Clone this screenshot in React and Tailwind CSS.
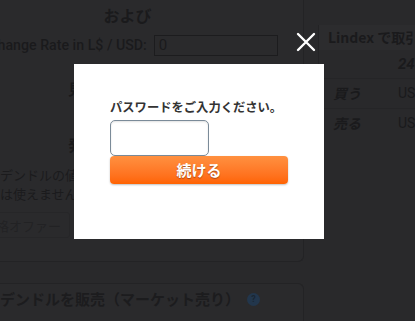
import React from 'react';

const LeftColumn = () => (
    <div className="w-[352px] shrink-0 ml-[-48px] flex flex-col">
        {/* Buy card */}
        <div className="h-[262px] bg-[#2a2a2c] border-r border-b border-[#232325] rounded-br-[6px] flex flex-col">
            <div className="h-[27px] flex items-end justify-center text-[16px] font-bold text-[#1a1a1c]">
                および
            </div>
            <div className="mt-[8px] ml-[-2px] flex items-center justify-center gap-[7px]">
                <span className="font-['Roboto',sans-serif] text-[14.2px] font-medium text-[#1a1a1c]">Exchange Rate in L$ / USD:</span>
                <div className="w-[124px] h-[21px] border border-[#1c1c1e] px-[4px] flex items-center font-['Roboto',sans-serif] text-[15px] text-[#1a1a1c]">0</div>
            </div>
            <div className="mt-[22px] pl-[116px] text-[15px] font-bold text-[#1a1a1c]">見積もり合計金額</div>
            <div className="mt-[33px] pl-[116px] text-[15px] font-bold text-[#1a1a1c]">発注するデンドル数</div>
            <div className="mt-[9px] pl-[48px] text-[13px] leading-[19px] text-[#1b1b1d]">
                <div>デンドルの値段はオファー価格で決まります</div>
                <div>は使えません。</div>
            </div>
            <div className="mt-[9px] ml-[20px] w-[98px] h-[26px] border border-[#262628] rounded-[3px] flex items-center justify-end pr-[8px] text-[13px] text-[#222224]">
                価格オファー
            </div>
        </div>
        {/* Sell card */}
        <div className="mt-[21px] flex-1 bg-[#2a2a2c] border-t border-r border-[#232325] rounded-tr-[6px] pl-[48px] pt-[4px]">
            <div className="flex items-center gap-[7px]">
                <span className="text-[15px] font-bold text-[#1c1c1e]">デンドルを販売（マーケット売り）</span>
                <span className="w-[13px] h-[13px] rounded-full bg-[#22364c] flex items-center justify-center font-['Roboto',sans-serif] text-[9px] font-bold text-[#1a2633]">?</span>
            </div>
        </div>
    </div>
);

const RightColumn = () => (
    <div className="ml-[14px] flex-1 pt-[25px]">
        <div className="border-l border-[#232325] bg-[#29292b]">
            <div className="h-[25px] bg-[#2c2c2e] flex items-center pl-[9px] text-[14px] font-bold text-[#1a1a1c] whitespace-nowrap">
                Lindex で取引データ
            </div>
            <div className="h-[28px] flex items-center pl-[79px] font-['Roboto',sans-serif] text-[15px] font-bold italic text-[#1a1a1c]">24</div>
            <div className="h-[30px] border-t border-[#252527] flex items-center text-[14px] text-[#1a1a1c]">
                <span className="w-[34px] pl-[14px] font-bold italic whitespace-nowrap">買う</span>
                <span className="ml-[45px] font-['Roboto',sans-serif]">USD</span>
            </div>
            <div className="h-[30px] border-t border-[#252527] flex items-center text-[14px] text-[#1a1a1c]">
                <span className="w-[34px] pl-[14px] font-bold italic whitespace-nowrap">売る</span>
                <span className="ml-[45px] font-['Roboto',sans-serif]">USD</span>
            </div>
        </div>
    </div>
);

const PasswordDialog = () => (
    <>
        <button className="fixed left-[296px] top-[32px] w-[20px] h-[20px]" aria-label="close">
            <svg viewBox="0 0 20 20" width="20" height="20">
                <path d="M2 2 L18 18 M18 2 L2 18" stroke="#ffffff" strokeWidth="2.4" strokeLinecap="round" />
            </svg>
        </button>
        <div className="fixed left-[74px] top-[64px] w-[250px] h-[175px] bg-white pl-[36px] pt-[34px]">
            <div className="h-[18px] leading-[18px] text-[12.3px] font-bold text-[#333333] whitespace-nowrap">
                パスワードをご入力ください。
            </div>
            <input
                type="password"
                className="mt-[4px] block w-[99px] h-[36px] border border-[#7b8b99] rounded-[5px] shadow-[inset_0_1px_2px_rgba(0,0,0,0.12)] outline-none"
            />
            <button className="block w-[178px] h-[28px] rounded-[4px] bg-linear-to-b from-[#ff903f] to-[#ff6300] text-white text-[15px] font-bold shadow-[0_1px_2px_rgba(0,0,0,0.25)] [text-shadow:0_1px_1px_rgba(0,0,0,0.35)]">
                続ける
            </button>
        </div>
    </>
);

export default function App() {
    return (
        <div className="w-[415px] h-[321px] overflow-hidden bg-[#29292b] flex font-['Noto_Sans_CJK_JP','Noto_Sans',sans-serif]">
            <LeftColumn />
            <RightColumn />
            <PasswordDialog />
        </div>
    );
}
